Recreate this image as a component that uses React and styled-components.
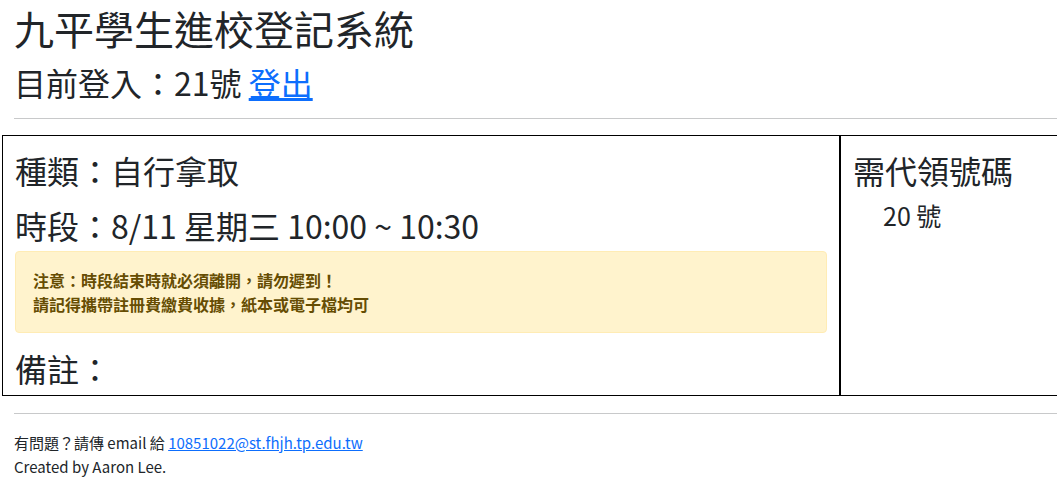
import React from "react";
import styled, { createGlobalStyle } from "styled-components";

const colors = {
  text: "#212529",
  link: "#0d6efd",
  rule: "#c8c9ca",
  warnBg: "#fff3cd",
  warnBorder: "#ffecb5",
  warnText: "#664d03",
};

const GlobalStyle = createGlobalStyle`
  *, *::before, *::after {
    box-sizing: border-box;
  }
  html, body {
    margin: 0;
    padding: 0;
    background: #fff;
    overflow-x: hidden;
  }
  body {
    font-family: "Noto Sans CJK TC", "Noto Sans", sans-serif;
    color: ${colors.text};
    font-size: 16px;
    line-height: 1.5;
  }
`;

const Page = styled.div`
  padding: 4px 0 0 14px;
`;

const Title = styled.h1`
  margin: 0;
  font-size: 40px;
  font-weight: 400;
  line-height: 48px;
`;

const LoginLine = styled.h2`
  margin: 11px 0 0;
  font-size: 32px;
  font-weight: 400;
  line-height: 38px;
`;

const Link = styled.a`
  color: ${colors.link};
  text-decoration: underline;
`;

const Rule = styled.hr`
  margin: ${(p) => p.$margin || "16px 0"};
  border: 0;
  border-top: 1px solid ${colors.rule};
  height: 0;
`;

const Board = styled.div`
  display: flex;
  margin-left: -12px;
  width: calc(100% + 60px);
  border: 1px solid #000;
`;

const MainCell = styled.div`
  width: 838px;
  flex-shrink: 0;
  padding: 14px 12px 7px;
  border-right: 2px solid #000;
`;

const SideCell = styled.div`
  flex: 1;
  padding: 14px 12px 7px;
`;

const Heading = styled.div`
  font-size: 32px;
  line-height: 40px;
  margin-bottom: ${(p) => p.$gap || "0"};
`;

const Alert = styled.div`
  background: ${colors.warnBg};
  border: 1px solid ${colors.warnBorder};
  border-radius: 4px;
  color: ${colors.warnText};
  padding: 16px 17px;
  font-size: 16px;
  font-weight: 700;
  line-height: 24px;
  margin: 6px 0 15px;
`;

const Number = styled.div`
  font-size: 25px;
  line-height: 32px;
  padding-left: 30px;
  margin-top: 9px;
`;

const Footer = styled.footer`
  margin-top: 17px;
  font-size: 15px;
  line-height: 24px;
`;

export default function App() {
  return (
    <>
      <GlobalStyle />
      <Page lang="zh-TW">
        <Title>九平學生進校登記系統</Title>
        <LoginLine>
          目前登入：21號 <Link href="#">登出</Link>
        </LoginLine>
        <Rule $margin="17px 0 16px" />
        <Board>
          <MainCell>
            <Heading $gap="15px">種類：自行拿取</Heading>
            <Heading>時段：8/11 星期三 10:00 ~ 10:30</Heading>
            <Alert>
              注意：時段結束時就必須離開，請勿遲到！
              <br />
              請記得攜帶註冊費繳費收據，紙本或電子檔均可
            </Alert>
            <Heading>備註：</Heading>
          </MainCell>
          <SideCell>
            <Heading>需代領號碼</Heading>
            <Number>20 號</Number>
          </SideCell>
        </Board>
        <Rule $margin="17px 0 0" />
        <Footer>
          有問題？請傳 email 給{" "}
          <Link href="#">10851022@st.fhjh.tp.edu.tw</Link>
          <br />
          Created by Aaron Lee.
        </Footer>
      </Page>
    </>
  );
}
